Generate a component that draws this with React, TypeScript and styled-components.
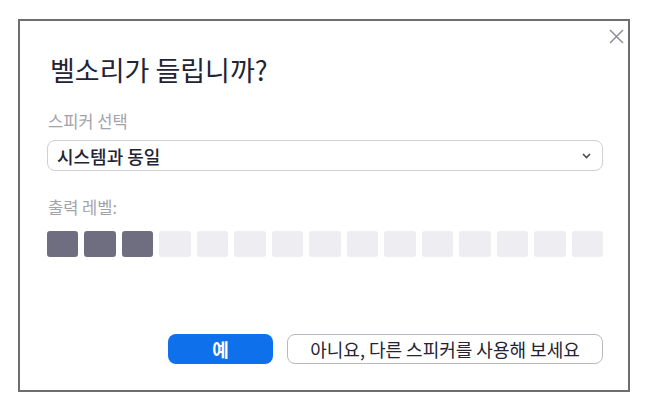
import React from "react";
import styled, { createGlobalStyle } from "styled-components";

const Global = createGlobalStyle`
  html, body { margin: 0; padding: 0; background: #ffffff; }
  body { font-family: "Noto Sans CJK KR", "Noto Sans", sans-serif; }
  * { box-sizing: border-box; }
`;

const Page = styled.div`
  width: 650px;
  height: 410px;
  padding: 19px 20px 18px 18px;
`;

const Dialog = styled.div`
  position: relative;
  width: 612px;
  height: 373px;
  border: 2px solid #6e6e6e;
  padding: 33px 25px 0 27px;
  display: flex;
  flex-direction: column;
`;

const Close = styled.button`
  position: absolute;
  top: 6px;
  right: 3px;
  width: 18px;
  height: 18px;
  padding: 0;
  border: none;
  background: none;
  display: flex;
  align-items: center;
  justify-content: center;
`;

const Title = styled.h1`
  margin: 0 0 0 3px;
  font-size: 27px;
  line-height: 32px;
  font-weight: 400;
  color: #232333;
`;

const Label = styled.div<{ $top: number }>`
  margin: ${(p) => p.$top}px 0 0 1px;
  font-size: 16.5px;
  line-height: 20px;
  color: #a3a3ab;
`;

const Select = styled.div`
  margin-top: 9px;
  height: 31px;
  border: 1px solid #cfcfd9;
  border-radius: 8px;
  display: flex;
  align-items: center;
  justify-content: space-between;
  padding: 0 11px 0 9px;
  font-size: 18px;
  font-weight: 500;
  color: #232333;
`;

const Levels = styled.div`
  margin-top: 14px;
  display: flex;
  gap: 6px;
  height: 26px;
`;

const Bar = styled.div<{ $on: boolean }>`
  flex: 1;
  border-radius: 3px;
  background: ${(p) => (p.$on ? "#6e6e80" : "#ededf2")};
`;

const Actions = styled.div`
  margin-top: auto;
  margin-bottom: 26px;
  display: flex;
  justify-content: flex-end;
  gap: 14px;
`;

const Button = styled.button<{ $primary?: boolean }>`
  height: 30px;
  border-radius: 8px;
  font-family: "Noto Sans CJK KR", "Noto Sans", sans-serif;
  font-size: 18px;
  line-height: 1;
  padding: 0 12px;
  display: flex;
  align-items: center;
  justify-content: center;
  cursor: pointer;
  ${(p) =>
    p.$primary
      ? `width: 105px; background: #0e71eb; color: #ffffff; border: none; font-weight: 700;`
      : `width: 316px; background: #ffffff; color: #232333; border: 1px solid #b9b9c2;`}
`;

export default function App() {
  const levels = Array.from({ length: 15 }, (_, i) => i < 3);
  return (
    <>
      <Global />
      <Page>
        <Dialog>
          <Close aria-label="닫기">
            <svg width="15" height="15" viewBox="0 0 15 15">
              <path d="M1 1 L14 14 M14 1 L1 14" stroke="#8e8e9e" strokeWidth="1.5" fill="none" />
            </svg>
          </Close>
          <Title>벨소리가 들립니까?</Title>
          <Label $top={25}>스피커 선택</Label>
          <Select>
            <span>시스템과 동일</span>
            <svg width="9" height="6" viewBox="0 0 9 6">
              <path d="M1 1 L4.5 4.5 L8 1" stroke="#4a4a55" strokeWidth="1.6" fill="none" />
            </svg>
          </Select>
          <Label $top={26}>출력 레벨:</Label>
          <Levels>
            {levels.map((on, i) => (
              <Bar key={i} $on={on} />
            ))}
          </Levels>
          <Actions>
            <Button $primary>예</Button>
            <Button>아니요, 다른 스피커를 사용해 보세요</Button>
          </Actions>
        </Dialog>
      </Page>
    </>
  );
}
